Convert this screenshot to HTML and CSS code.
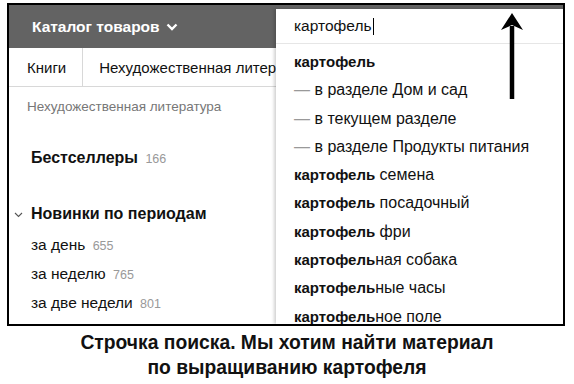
FILE: index.html
```html
<!DOCTYPE html>
<html>
<head>
  <meta charset="UTF-8">
  <title>Поиск по каталогу</title>
  <link rel="stylesheet" href="styles.css">
</head>
<body>
<div class="frame">
  <div class="topbar">
    <span class="catalog">Каталог товаров
      <svg class="chev" width="12" height="8" viewBox="0 0 12 8"><path d="M1.5 1.5 L6 6 L10.5 1.5" fill="none" stroke="#fff" stroke-width="2.4"/></svg>
    </span>
  </div>
  <div class="tabs">
    <span class="tab first">Книги</span>
    <span class="tab">Нехудожественная литература</span>
  </div>
  <div class="crumbs">Нехудожественная литература</div>

  <div class="side">
    <div class="group">Бестселлеры <span class="cnt">166</span></div>
    <div class="group open">
      <svg class="twist" width="9" height="6" viewBox="0 0 9 6"><path d="M1 1 L4.5 4.5 L8 1" fill="none" stroke="#555" stroke-width="1.1"/></svg>
      Новинки по периодам
    </div>
    <ul class="periods">
      <li>за день <span class="cnt">655</span></li>
      <li>за неделю <span class="cnt">765</span></li>
      <li>за две недели <span class="cnt">801</span></li>
    </ul>
  </div>

  <!-- search box with its open suggestion list -->
  <div class="search">
    <div class="query">картофель<span class="caret"></span></div>
    <ul class="suggest">
      <li><b>картофель</b></li>
      <li class="sub"><span class="dash">—</span> в разделе Дом и сад</li>
      <li class="sub"><span class="dash">—</span> в текущем разделе</li>
      <li class="sub"><span class="dash">—</span> в разделе Продукты питания</li>
      <li><b>картофель</b> семена</li>
      <li><b>картофель</b> посадочный</li>
      <li><b>картофель</b> фри</li>
      <li><b>картофель</b>ная собака</li>
      <li><b>картофель</b>ные часы</li>
      <li><b>картофель</b>ное поле</li>
    </ul>
  </div>

  <svg class="arrow" width="26" height="88" viewBox="0 0 26 88">
    <path d="M13 14 V87" stroke="#000" stroke-width="4.5"/>
    <path d="M2 18 L13 1 L24 18 L13 13 Z" fill="#000"/>
  </svg>
</div>

<p class="caption">Строчка поиска. Мы хотим найти материал<br>по выращиванию картофеля</p>
</body>
</html>
```

FILE: styles.css
```css
body {
  margin: 0;
  background: #fff;
  font-family: "Liberation Sans", Arial, sans-serif;
  color: #111;
}

.frame {
  position: relative;
  margin: 3px 0 0 7px;
  width: 554px;
  height: 319px;
  border: 2px solid #000;
  overflow: hidden;
}

.topbar {
  height: 43px;
  background: #636363;
  display: flex;
  align-items: center;
  padding-left: 23px;
}
.catalog {
  color: #fff;
  font-weight: bold;
  font-size: 15.5px;
  display: flex;
  align-items: center;
  gap: 6px;
}

.tabs {
  display: flex;
  height: 38px;
  border-bottom: 1px solid #d8d8d8;
  white-space: nowrap;
  font-size: 15px;
}
.tab {
  display: flex;
  align-items: center;
  padding: 0 16px;
  flex-shrink: 0;
}
.tab.first {
  padding-left: 18px;
  border-right: 1px solid #d8d8d8;
}
/* the rest of the tab row sits under the open search list */
.tab + .tab {
  flex-shrink: 1;
  min-width: 0;
  max-width: 183px;
  overflow: hidden;
  padding-right: 0;
}

.crumbs {
  font-size: 13.5px;
  color: #777;
  padding: 12px 0 0 18px;
}

.side { padding-left: 22px; }
.group {
  font-weight: bold;
  font-size: 16px;
  margin-top: 35px;
  position: relative;
}
.group.open { margin-top: 38px; }
.twist {
  position: absolute;
  left: -17px;
  top: 7px;
}
.cnt {
  font-weight: normal;
  font-size: 12.5px;
  color: #999;
  margin-left: 3px;
}
.periods {
  list-style: none;
  margin: 8px 0 0;
  padding: 0;
  font-size: 15.5px;
}
.periods li { line-height: 28.2px; }

.search {
  position: absolute;
  left: 267px;
  top: 4px;
  right: 0;
  bottom: 0;
  background: #fff;
  box-shadow: -2px 0 3px rgba(0,0,0,0.18);
}
.query {
  height: 34px;
  display: flex;
  align-items: center;
  padding-left: 18px;
  font-size: 15.5px;
  border-bottom: 1px solid #e6e6e6;
}
.caret {
  display: inline-block;
  width: 1px;
  height: 17px;
  background: #000;
  margin-left: 1px;
}
.suggest {
  list-style: none;
  margin: 0;
  padding: 4px 0 0 18px;
  font-size: 16px;
}
.suggest li {
  height: 28.3px;
  line-height: 28px;
  white-space: nowrap;
}
.suggest b { font-size: 15px; }
.dash { color: #999; }

.arrow {
  position: absolute;
  left: 490px;
  top: 7px;
}

.caption {
  margin: 4px 0 0;
  text-align: center;
  font-weight: bold;
  font-size: 19.3px;
  line-height: 25px;
  color: #111;
}
```
